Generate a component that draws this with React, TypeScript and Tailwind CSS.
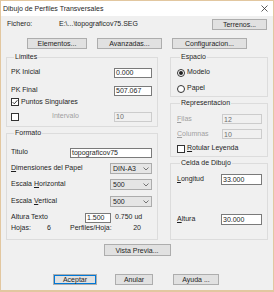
import type { ReactNode } from 'react';

function Btn({ children, className = '' }: { children: ReactNode; className?: string }) {
  return (
    <div
      className={`h-[11px] flex items-center justify-center bg-[#e1e1e1] border border-[#adadad] text-[#1e1e1e] leading-none ${className}`}
    >
      {children}
    </div>
  );
}

function Field({ value, className = '', disabled = false }: { value: string; className?: string; disabled?: boolean }) {
  return (
    <div
      className={`h-[10px] flex items-center pl-[1px] border leading-none ${
        disabled ? 'bg-[#f0f0f0] border-[#cccccc] text-[#6d6d6d]' : 'bg-white border-[#7a7a7a] text-[#1e1e1e]'
      } ${className}`}
    >
      {value}
    </div>
  );
}

function Combo({ value }: { value: string }) {
  return (
    <div className="w-[42px] h-[11px] flex items-center justify-between pl-[2px] pr-[2px] bg-[#e5e5e5] border border-[#acacac] leading-none">
      <span>{value}</span>
      <svg width="6" height="4" viewBox="0 0 6 4" className="text-[#555]">
        <polyline points="0.5,0.5 3,3 5.5,0.5" fill="none" stroke="currentColor" strokeWidth="0.8" />
      </svg>
    </div>
  );
}

function Check({ checked }: { checked?: boolean }) {
  return (
    <div className="w-[8px] h-[8px] bg-white border border-[#333333] flex items-center justify-center shrink-0">
      {checked && (
        <svg width="6" height="6" viewBox="0 0 6 6">
          <polyline points="0.6,3.1 2.3,4.8 5.4,1.2" fill="none" stroke="#222" strokeWidth="0.9" />
        </svg>
      )}
    </div>
  );
}

function Radio({ checked }: { checked?: boolean }) {
  return (
    <div className="w-[8px] h-[8px] rounded-full bg-white border border-[#333333] flex items-center justify-center shrink-0">
      {checked && <div className="w-[4px] h-[4px] rounded-full bg-[#222]" />}
    </div>
  );
}

function Group({ title, className = '', children }: { title: string; className?: string; children: ReactNode }) {
  return (
    <fieldset className={`border border-[#dcdcdc] ${className}`}>
      <legend className="ml-[3px] px-[1px] leading-[8px]">{title}</legend>
      {children}
    </fieldset>
  );
}

export default function App() {
  return (
    <div className="w-[274px] h-[292px] flex flex-col bg-[#f0f0f0] border border-b-2 border-[#e2c7a0] font-['Liberation_Sans',Arial,sans-serif] text-[7px] text-[#1e1e1e]">
      {/* Title bar */}
      <div className="h-[15px] bg-white flex items-center justify-between pl-[2px] pr-[5px] shrink-0">
        <span className="leading-none">Dibujo de Perfiles Transversales</span>
        <svg width="7" height="7" viewBox="0 0 7 7">
          <path d="M0.5 0.5 L6.5 6.5 M6.5 0.5 L0.5 6.5" stroke="#333" strokeWidth="0.8" />
        </svg>
      </div>

      <div className="flex-1 flex flex-col pl-[5px] pr-[5px]">
        {/* Fichero */}
        <div className="mt-[3px] h-[11px] flex items-center">
          <span className="ml-[1px] w-[52px]">Fichero:</span>
          <span>{'E:\\...\\topograficov75.SEG'}</span>
          <Btn className="ml-auto w-[55px] mr-[1px]">Terrenos...</Btn>
        </div>

        {/* Top buttons */}
        <div className="mt-[8px] h-[11px] flex items-center">
          <Btn className="ml-[21px] w-[60px]">Elementos...</Btn>
          <Btn className="ml-[10px] w-[65px]">Avanzadas...</Btn>
          <Btn className="ml-[10px] w-[75px]">Configuracion...</Btn>
        </div>

        {/* Columns */}
        <div className="mt-[4px] flex gap-[12px]">
          <div className="w-[152px] flex flex-col gap-[2px]">
            <Group title="Limites" className="h-[74px] pl-[4px] pr-[5px]">
              <div className="mt-[6px] h-[11px] flex items-center justify-between">
                <span>PK Inicial</span>
                <Field value="0.000" className="w-[38px]" />
              </div>
              <div className="mt-[7px] h-[11px] flex items-center justify-between">
                <span>PK Final</span>
                <Field value="507.067" className="w-[38px]" />
              </div>
              <div className="mt-[1px] h-[10px] flex items-center gap-[2px]">
                <Check checked />
                <span>Puntos Singulares</span>
              </div>
              <div className="mt-[4px] h-[11px] flex items-center">
                <Check />
                <span className="ml-[33px] text-[#a0a0a0]">Intervalo</span>
                <Field value="10" disabled className="ml-auto w-[38px]" />
              </div>
            </Group>

            <Group title="Formato" className="h-[111px] pl-[4px] pr-[5px]">
              <div className="mt-[10px] h-[11px] flex items-center justify-between">
                <span>Titulo</span>
                <Field value="topograficov75" className="w-[82px]" />
              </div>
              <div className="mt-[5px] h-[11px] flex items-center justify-between">
                <span>
                  <u>D</u>imensiones del Papel
                </span>
                <Combo value="DIN-A3" />
              </div>
              <div className="mt-[5px] h-[11px] flex items-center justify-between">
                <span>
                  Escala <u>H</u>orizontal
                </span>
                <Combo value="500" />
              </div>
              <div className="mt-[6px] h-[11px] flex items-center justify-between">
                <span>
                  Escala <u>V</u>ertical
                </span>
                <Combo value="500" />
              </div>
              <div className="mt-[5px] h-[11px] flex items-center">
                <span className="w-[74px]">Altura Texto</span>
                <Field value="1.500" className="w-[26px]" />
                <span className="ml-[4px]">0.750 ud</span>
              </div>
              <div className="mt-[1px] h-[9px] flex items-center">
                <span className="w-[36px]">Hojas:</span>
                <span className="w-[23px]">6</span>
                <span>Perfiles/Hoja:</span>
                <span className="ml-auto mr-[11px]">20</span>
              </div>
            </Group>
          </div>

          <div className="w-[98px] flex flex-col gap-[2px]">
            <Group title="Espacio" className="h-[44px] pl-[6px] pr-[5px]">
              <div className="mt-[7px] h-[9px] flex items-center gap-[2px]">
                <Radio checked />
                <span>Modelo</span>
              </div>
              <div className="mt-[7px] h-[9px] flex items-center gap-[2px]">
                <Radio />
                <span>Papel</span>
              </div>
            </Group>

            <Group title="Representacion" className="h-[58px] pl-[6px] pr-[5px]">
              <div className="mt-[7px] h-[10px] flex items-center justify-between">
                <span className="text-[#a0a0a0]">
                  <u>F</u>ilas
                </span>
                <Field value="12" disabled className="w-[40px]" />
              </div>
              <div className="mt-[5px] h-[10px] flex items-center justify-between">
                <span className="text-[#a0a0a0]">
                  <u>C</u>olumnas
                </span>
                <Field value="10" disabled className="w-[40px]" />
              </div>
              <div className="mt-[5px] h-[9px] flex items-center gap-[2px]">
                <Check />
                <span>
                  <u>R</u>otular Leyenda
                </span>
              </div>
            </Group>

            <Group title="Celda de Dibujo" className="h-[81px] pl-[6px] pr-[5px]">
              <div className="mt-[7px] h-[11px] flex items-center justify-between">
                <span>
                  <u>L</u>ongitud
                </span>
                <Field value="33.000" className="w-[41px] h-[11px]" />
              </div>
              <div className="mt-[29px] h-[11px] flex items-center justify-between">
                <span>
                  <u>A</u>ltura
                </span>
                <Field value="30.000" className="w-[41px] h-[11px]" />
              </div>
            </Group>
          </div>
        </div>

        {/* Vista previa */}
        <div className="mt-[4px] flex justify-center">
          <Btn className="w-[67px] h-[12px]">Vista Previa...</Btn>
        </div>

        {/* Bottom buttons */}
        <div className="mt-[18px] flex items-center">
          <Btn className="ml-[47px] w-[44px] border-[#0078d7] shadow-[inset_0_0_0_1px_#0078d7]">Aceptar</Btn>
          <Btn className="ml-[18px] w-[38px]">Anular</Btn>
          <Btn className="ml-[20px] w-[46px]">Ayuda ...</Btn>
        </div>
      </div>
    </div>
  );
}
